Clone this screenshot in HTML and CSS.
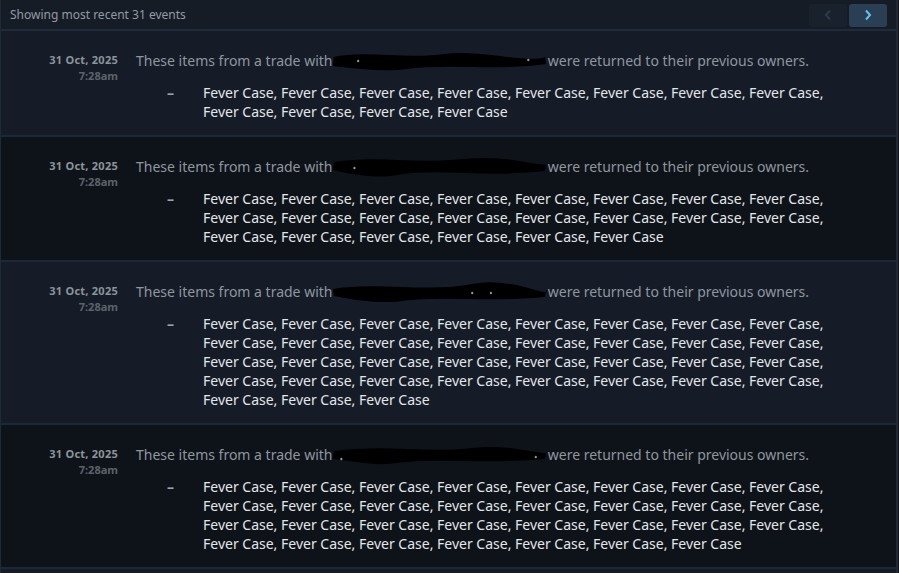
FILE: index.html
```html
<!DOCTYPE html>
<html>
<head>
<meta charset="utf-8">
<link rel="stylesheet" href="styles.css">
</head>
<body>
<div class="panel">
  <div class="header">
    <span class="count">Showing most recent 31 events</span>
    <div class="pager">
      <button class="pbtn off"><svg width="8" height="12" viewBox="0 0 8 12"><path d="M6 1.5 L2 6 L6 10.5" fill="none" stroke="currentColor" stroke-width="2"/></svg></button>
      <button class="pbtn on"><svg width="8" height="12" viewBox="0 0 8 12"><path d="M2 1.5 L6 6 L2 10.5" fill="none" stroke="currentColor" stroke-width="2"/></svg></button>
    </div>
  </div>

  <div class="row light">
    <div class="when"><div class="day">31 Oct, 2025</div><div class="time">7:28am</div></div>
    <div class="content">
      <div class="desc">These items from a trade with <svg class="redact" viewBox="0 0 230 20" preserveAspectRatio="none"><path d="M2 6 Q20 2 60 4 T120 3 T180 5 T228 6 L229 13 Q200 17 150 16 T80 18 T20 17 L1 15 Z"/><circle cx="28" cy="10" r="1.2" fill="#8f969e"/><circle cx="210" cy="9" r="1.2" fill="#8f969e"/></svg> were returned to their previous owners.</div>
      <div class="items"><span class="dash">–</span><div class="list">Fever Case, Fever Case, Fever Case, Fever Case, Fever Case, Fever Case, Fever Case, Fever Case, Fever Case, Fever Case, Fever Case, Fever Case</div></div>
    </div>
  </div>

  <div class="row dark">
    <div class="when"><div class="day">31 Oct, 2025</div><div class="time">7:28am</div></div>
    <div class="content">
      <div class="desc">These items from a trade with <svg class="redact" viewBox="0 0 230 20" preserveAspectRatio="none"><path d="M2 5 Q30 1 70 3 T140 2 T200 4 T229 7 L228 14 Q190 18 140 16 T70 18 T15 16 L1 13 Z"/><circle cx="24" cy="11" r="1.2" fill="#8f969e"/></svg> were returned to their previous owners.</div>
      <div class="items"><span class="dash">–</span><div class="list">Fever Case, Fever Case, Fever Case, Fever Case, Fever Case, Fever Case, Fever Case, Fever Case, Fever Case, Fever Case, Fever Case, Fever Case, Fever Case, Fever Case, Fever Case, Fever Case, Fever Case, Fever Case, Fever Case, Fever Case, Fever Case, Fever Case</div></div>
    </div>
  </div>

  <div class="row light">
    <div class="when"><div class="day">31 Oct, 2025</div><div class="time">7:28am</div></div>
    <div class="content">
      <div class="desc">These items from a trade with <svg class="redact" viewBox="0 0 230 20" preserveAspectRatio="none"><path d="M1 7 Q25 3 75 5 T150 2 T210 6 T229 8 L228 15 Q195 18 145 17 T75 19 T20 17 L2 14 Z"/><circle cx="150" cy="11" r="1.2" fill="#8f969e"/><circle cx="170" cy="11" r="1.2" fill="#8f969e"/></svg> were returned to their previous owners.</div>
      <div class="items"><span class="dash">–</span><div class="list">Fever Case, Fever Case, Fever Case, Fever Case, Fever Case, Fever Case, Fever Case, Fever Case, Fever Case, Fever Case, Fever Case, Fever Case, Fever Case, Fever Case, Fever Case, Fever Case, Fever Case, Fever Case, Fever Case, Fever Case, Fever Case, Fever Case, Fever Case, Fever Case, Fever Case, Fever Case, Fever Case, Fever Case, Fever Case, Fever Case, Fever Case, Fever Case, Fever Case, Fever Case, Fever Case</div></div>
    </div>
  </div>

  <div class="row dark">
    <div class="when"><div class="day">31 Oct, 2025</div><div class="time">7:28am</div></div>
    <div class="content">
      <div class="desc">These items from a trade with <svg class="redact" viewBox="0 0 230 20" preserveAspectRatio="none"><path d="M2 6 Q35 2 80 4 T150 3 T205 5 T229 7 L228 14 Q190 17 140 16 T70 18 T18 16 L1 14 Z"/><circle cx="10" cy="14" r="1.2" fill="#8f969e"/><circle cx="218" cy="12" r="1.2" fill="#8f969e"/></svg> were returned to their previous owners.</div>
      <div class="items"><span class="dash">–</span><div class="list">Fever Case, Fever Case, Fever Case, Fever Case, Fever Case, Fever Case, Fever Case, Fever Case, Fever Case, Fever Case, Fever Case, Fever Case, Fever Case, Fever Case, Fever Case, Fever Case, Fever Case, Fever Case, Fever Case, Fever Case, Fever Case, Fever Case, Fever Case, Fever Case, Fever Case, Fever Case, Fever Case, Fever Case, Fever Case, Fever Case, Fever Case</div></div>
    </div>
  </div>

  <div class="more"></div>
</div>
</body>
</html>
```
FILE: styles.css
```css
html, body {
  margin: 0;
  padding: 0;
  background: #10151d;
  height: 573px;
  overflow: hidden;
}
body {
  font-family: "Noto Sans", "Open Sans", sans-serif;
}
.panel {
  width: 895px;
  border-left: 1px solid #1f2a39;
  border-right: 2px solid #1f2a39;
  background: #151b26;
}
.header {
  height: 29px;
  display: flex;
  align-items: center;
  justify-content: space-between;
  padding: 0 9px 0 9px;
  background: #161c26;
  border-bottom: 2px solid #1f2a3a;
}
.count {
  font-size: 12px;
  color: #939aa3;
}
.pager {
  display: flex;
  gap: 2px;
  padding-top: 1px;
}
.pbtn {
  width: 38px;
  height: 23px;
  border: 0;
  border-radius: 3px;
  display: flex;
  align-items: center;
  justify-content: center;
  padding: 0;
}
.pbtn.off {
  background: #19212c;
  color: #2b3a4b;
}
.pbtn.on {
  background: #2a3f54;
  color: #66c0f4;
}
.row {
  display: flex;
  gap: 18px;
  padding: 20px 0 14px 0;
  border-bottom: 2px solid #1d2735;
}
.row.light { background: #151c28; }
.row.dark { background: #0e131a; }
.more {
  height: 20px;
  background: #151c28;
}
.when {
  width: 117px;
  text-align: right;
  font-weight: 700;
  font-size: 11px;
  line-height: 16px;
  padding-top: 1px;
}
.day {
  color: #8c939b;
  letter-spacing: 0.25px;
}
.time { color: #5d6268; }
.content {
  flex: 1;
}
.desc {
  font-size: 14px;
  line-height: 19px;
  height: 19px;
  color: #8f969e;
  white-space: nowrap;
}
.redact {
  display: inline-block;
  width: 215px;
  height: 20px;
  vertical-align: -5px;
  fill: #000;
  margin: 0 -3px 0 -4px;
}
.items {
  display: flex;
  margin-top: 13px;
  padding-left: 31px;
  font-size: 14px;
  line-height: 19px;
}
.dash {
  width: 36px;
  flex: none;
  font-weight: 700;
  color: #9aa1a8;
}
.list {
  width: 640px;
  color: #e3e6e9;
}
```
